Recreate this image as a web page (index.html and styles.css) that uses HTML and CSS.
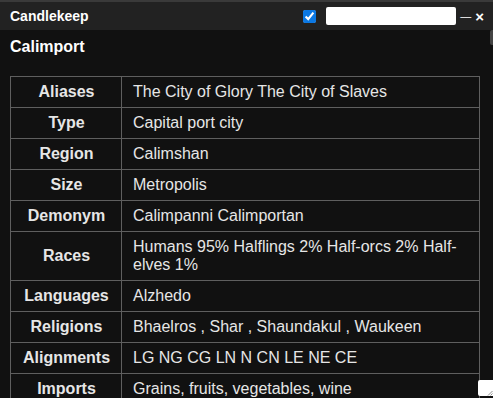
FILE: index.html
```html
<!DOCTYPE html>
<html>
<head>
<meta charset="utf-8">
<link rel="stylesheet" href="styles.css">
</head>
<body>
<div class="window">
  <div class="topstrip"></div>
  <div class="titlebar">
    <span class="title">Candlekeep</span>
    <input class="check" type="checkbox" checked>
    <input class="search" type="text">
    <span class="btn min">—</span>
    <span class="btn close">×</span>
  </div>
  <div class="content">
    <h2 class="heading">Calimport</h2>
    <table class="info">
      <tr><th>Aliases</th><td>The City of Glory The City of Slaves</td></tr>
      <tr><th>Type</th><td>Capital port city</td></tr>
      <tr><th>Region</th><td>Calimshan</td></tr>
      <tr><th>Size</th><td>Metropolis</td></tr>
      <tr><th>Demonym</th><td>Calimpanni Calimportan</td></tr>
      <tr><th>Races</th><td>Humans 95% Halflings 2% Half-orcs 2% Half-elves 1%</td></tr>
      <tr><th>Languages</th><td>Alzhedo</td></tr>
      <tr><th>Religions</th><td>Bhaelros , Shar , Shaundakul , Waukeen</td></tr>
      <tr><th>Alignments</th><td>LG NG CG LN N CN LE NE CE</td></tr>
      <tr><th>Imports</th><td>Grains, fruits, vegetables, wine</td></tr>
    </table>
    <div class="thumb"></div>
    <div class="grip"><svg width="6" height="6" viewBox="0 0 6 6"><path d="M1 5.5 L5.5 1 M3.5 5.5 L5.5 3.5" stroke="#777" stroke-width="0.8"/></svg></div>
  </div>
</div>
</body>
</html>
```

FILE: styles.css
```css
html, body {
  margin: 0;
  padding: 0;
  background: #111111;
  height: 100%;
  overflow: hidden;
}
.window {
  font-family: "Liberation Sans", Arial, sans-serif;
  color: #e6e6e6;
  height: 398px;
  display: flex;
  flex-direction: column;
}
.topstrip {
  height: 2px;
  background: #3a3a3a;
}
.titlebar {
  height: 28px;
  background: #222222;
  display: flex;
  align-items: center;
  padding: 0 9px 0 10px;
}
.title {
  font-weight: bold;
  font-size: 14px;
  color: #ffffff;
  flex: 1;
}
.check {
  width: 13px;
  height: 13px;
  margin: 0 10px 0 0;
  accent-color: #0b78e3;
}
.search {
  width: 130px;
  height: 18px;
  box-sizing: border-box;
  border: none;
  border-radius: 2px;
  background: #ffffff;
  margin: 0 4px 0 0;
  padding: 0;
}
.btn {
  color: #ffffff;
  font-weight: bold;
  line-height: 1;
}
.min {
  font-size: 11px;
  font-weight: normal;
  margin-right: 4px;
}
.close {
  font-size: 15px;
}
.content {
  position: relative;
  flex: 1;
  padding: 8px 13px 0 10px;
  overflow: hidden;
}
.heading {
  margin: 0 0 20px 0;
  font-size: 16px;
  font-weight: bold;
  color: #ffffff;
  line-height: 18px;
}
.info {
  width: 100%;
  border-collapse: collapse;
  font-size: 16px;
}
.info th, .info td {
  border: 1px solid #5f5f5f;
  padding: 6px 10px 6px 11px;
  line-height: 18px;
  color: #e6e6e6;
}
.info th {
  width: 89px;
  padding-right: 10px;
  text-align: center;
  font-weight: bold;
}
.info td {
  text-align: left;
}
.thumb {
  position: absolute;
  right: 0;
  top: 0;
  width: 3px;
  height: 15px;
  background: #444;
  border-radius: 2px 0 0 2px;
}
.grip {
  position: absolute;
  right: 0;
  top: 350px;
  width: 15px;
  height: 16px;
  background: #ffffff;
  border-radius: 2px 0 0 2px;
  display: flex;
  align-items: flex-end;
  justify-content: flex-end;
}
.grip svg {
  display: block;
}
```
